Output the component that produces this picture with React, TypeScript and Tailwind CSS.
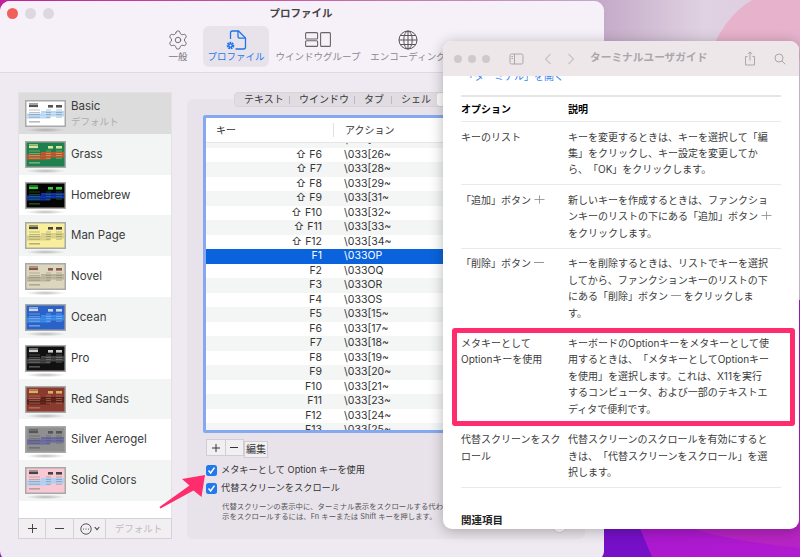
import React from "react";
import { Settings } from "lucide-react";

const FONT = 'Inter, "Noto Sans CJK JP", sans-serif';

const themes = [
  { name: "Basic", bg: "#ffffff", band: "#b4d8f8", head: "#555555", fg: "#777777" },
  { name: "Grass", bg: "#1f7f4d", band: "#c8542a", head: "#d8e89a", fg: "#d8d8a0" },
  { name: "Homebrew", bg: "#050505", band: "#1030b0", head: "#38d038", fg: "#2a9a2a" },
  { name: "Man Page", bg: "#f8ee9c", band: "#d8d088", head: "#444444", fg: "#77735a" },
  { name: "Novel", bg: "#dcd6be", band: "#b8b298", head: "#8a5a50", fg: "#857a68" },
  { name: "Ocean", bg: "#2a62c8", band: "#3a8ae8", head: "#d0d8e8", fg: "#b8cff0" },
  { name: "Pro", bg: "#111111", band: "#444444", head: "#cccccc", fg: "#999999" },
  { name: "Red Sands", bg: "#8a3a2e", band: "#5a2018", head: "#d8b060", fg: "#c8a080" },
  { name: "Silver Aerogel", bg: "#8f8f8f", band: "#6a6aa0", head: "#555555", fg: "#555555" },
  { name: "Solid Colors", bg: "#f8c8d4", band: "#a9d2f6", head: "#444444", fg: "#777777" },
];

function Thumb({ t }: { t: (typeof themes)[number] }) {
  return (
    <svg width="41" height="34" viewBox="0 0 41 34" className="shrink-0">
      <defs>
        <radialGradient id="thumbShadow">
          <stop offset="0%" stopColor="#888" stopOpacity="0.55" />
          <stop offset="100%" stopColor="#888" stopOpacity="0" />
        </radialGradient>
      </defs>
      <ellipse cx="20.5" cy="30" rx="20" ry="2.2" fill="url(#thumbShadow)" />
      <rect x="0" y="0" width="41" height="27" fill="#a9a9a9" />
      <rect x="1.5" y="1.5" width="38" height="24" fill={t.bg} />
      <rect x="4" y="3" width="9" height="0.7" fill={t.fg} />
      <rect x="4" y="4.5" width="9" height="2.6" fill={t.head} />
      <rect x="23" y="5" width="5" height="2.6" fill={t.head} />
      <rect x="31" y="5" width="6" height="2.6" fill={t.head} />
      <rect x="16" y="11" width="23" height="2.5" fill={t.band} />
      <rect x="2" y="13.5" width="37" height="3" fill={t.band} />
      <rect x="2" y="16.5" width="23" height="2" fill={t.band} />
      {[9.7, 12, 14.3, 16.8].map((y) => (
        <g key={y} fill={t.fg} opacity="0.75">
          <rect x="4" y={y} width="11" height="0.6" />
          <rect x="21" y={y} width="5" height="0.6" />
          <rect x="31" y={y} width="6" height="0.6" />
        </g>
      ))}
      <rect x="4" y="21.5" width="11" height="0.8" fill={t.fg} />
    </svg>
  );
}

function DocIcon() {
  return (
    <svg width="24" height="24" viewBox="0 0 24 24" fill="none" stroke="#1f74ee" strokeWidth="1.3">
      <path d="M6.5 11V5a2 2 0 0 1 2-2h6l7 7v9a2 2 0 0 1-2 2h-8" />
      <path d="M14 3v5.2a2 2 0 0 0 2 2h5.4" />
      <circle cx="6.5" cy="17.5" r="2.6" strokeWidth="2.4" strokeDasharray="1.6 0.6" />
      <circle cx="6.5" cy="17.5" r="2.2" fill="#1f74ee" stroke="none" />
      <circle cx="6.5" cy="17.5" r="1" fill="#f0ebf2" stroke="none" />
    </svg>
  );
}

function GroupIcon() {
  return (
    <svg width="26" height="15" viewBox="0 0 26 15" fill="none" stroke="#666" strokeWidth="1.1">
      <rect x="0.6" y="0.6" width="12" height="6.4" rx="1" />
      <rect x="0.6" y="8.8" width="12" height="5.6" rx="1" />
      <rect x="15.6" y="0.6" width="9.8" height="13.8" rx="1" />
    </svg>
  );
}

function GlobeIcon() {
  return (
    <svg width="20" height="20" viewBox="0 0 20 20" fill="none" stroke="#555" strokeWidth="1">
      <circle cx="10" cy="10" r="9" />
      <ellipse cx="10" cy="10" rx="4.2" ry="9" />
      <path d="M10 1v18M1 10h18M2.2 5.5h15.6M2.2 14.5h15.6" />
    </svg>
  );
}

function ToolItem({ icon, label, active, className }: { icon: React.ReactNode; label: string; active?: boolean; className: string }) {
  return (
    <div className={`flex flex-col items-center shrink-0 rounded-[6px] h-[41px] pt-[3px] ${active ? "bg-[#e8e3ea] text-[#2478f0]" : "text-[#8a868c]"} ${className}`}>
      <div className="h-[21px] flex items-center justify-center">{icon}</div>
      <div className="text-[9.5px] leading-[14px] whitespace-nowrap">{label}</div>
    </div>
  );
}

const keyRows: [string, string, boolean][] = [
  ["F5", "\\033[25~", true],
  ["F6", "\\033[26~", true],
  ["F7", "\\033[28~", true],
  ["F8", "\\033[29~", true],
  ["F9", "\\033[31~", true],
  ["F10", "\\033[32~", true],
  ["F11", "\\033[33~", true],
  ["F12", "\\033[34~", true],
  ["F1", "\\033OP", false],
  ["F2", "\\033OQ", false],
  ["F3", "\\033OR", false],
  ["F4", "\\033OS", false],
  ["F5", "\\033[15~", false],
  ["F6", "\\033[17~", false],
  ["F7", "\\033[18~", false],
  ["F8", "\\033[19~", false],
  ["F9", "\\033[20~", false],
  ["F10", "\\033[21~", false],
  ["F11", "\\033[23~", false],
  ["F12", "\\033[24~", false],
  ["F13", "\\033[25~", false],
];

function Check({ label, className }: { label: React.ReactNode; className: string }) {
  return (
    <div className={`flex items-center ml-[19px] h-[12px] shrink-0 ${className}`}>
      <div className="w-[11px] h-[11px] rounded-[2.5px] bg-[#1f7aee] flex items-center justify-center shrink-0">
        <svg width="9" height="9" viewBox="0 0 9 9" fill="none" stroke="#fff" strokeWidth="1.5">
          <path d="M1.5 4.6 3.6 7l3.9-5.4" />
        </svg>
      </div>
      <div className="ml-[4px] text-[9.2px] leading-[12px] text-[#333] whitespace-nowrap">{label}</div>
    </div>
  );
}

function GuideRow({ left, right }: { left: React.ReactNode; right: React.ReactNode }) {
  return (
    <div className="flex border-b border-[#e9e9e9] py-[6.5px] text-[10px] leading-[16.45px] text-[#3c3c3c] whitespace-nowrap [text-spacing-trim:space-all]">
      <div className="w-[107px] shrink-0">{left}</div>
      <div>{right}</div>
    </div>
  );
}

const Plus = () => (
  <svg width="11" height="9" viewBox="0 0 11 11" className="inline-block align-baseline" preserveAspectRatio="none" stroke="#8a8a8a" strokeWidth="0.9">
    <path d="M5.5 0.5v10M0.5 5.5h10" />
  </svg>
);
const Minus = () => (
  <svg width="10" height="3" viewBox="0 0 10 3" className="inline-block align-[3px]" stroke="#8a8a8a" strokeWidth="0.9">
    <path d="M0 1.500h10" />
  </svg>
);

function Wallpaper() {
  return (
    <svg width="800" height="557" viewBox="0 0 800 557" className="absolute inset-0">
      <defs>
        <linearGradient id="wpTop" x1="0" y1="0" x2="1" y2="0">
          <stop offset="0" stopColor="#c01f9c" />
          <stop offset="0.3" stopColor="#c8509c" />
          <stop offset="0.75" stopColor="#c4aac8" />
          <stop offset="0.88" stopColor="#e0d2e2" />
          <stop offset="1" stopColor="#dccbe0" />
        </linearGradient>
        <linearGradient id="wpBot" x1="0" y1="0" x2="1" y2="0">
          <stop offset="0" stopColor="#9a14cc" />
          <stop offset="1" stopColor="#b01ad0" />
        </linearGradient>
      </defs>
      <rect width="800" height="300" fill="url(#wpTop)" />
      <rect y="300" width="800" height="257" fill="url(#wpBot)" />
      <path d="M708 60Q722 18 752 0H800V60Z" fill="#e6b2cc" />
      <path d="M600 500H628L652 557H600Z" fill="#7610c8" />
      <path d="M640 500Q670 535 800 548V500Z" fill="#b824c4" />
    </svg>
  );
}

export default function App() {
  return (
    <div className="relative w-[800px] h-[557px] overflow-hidden" style={{ fontFamily: FONT }}>
      <Wallpaper />

      {/* Preferences window */}
      <div className="absolute left-0 top-[1px] w-[604px] h-[560px] rounded-[10px] bg-[#efeaf2] overflow-hidden flex flex-col">
        <div className="relative h-[72px] shrink-0 bg-[#f6f1f9] border-b border-[#dedade]">
          <div className="flex items-center gap-[7px] pl-[7px] h-[24px]">
            <div className="w-[11px] h-[11px] rounded-full bg-[#f0605a]" />
            <div className="w-[11px] h-[11px] rounded-full bg-[#ddd8e0]" />
            <div className="w-[11px] h-[11px] rounded-full bg-[#ddd8e0]" />
          </div>
          <div className="absolute left-0 w-[602px] top-[5px] text-center text-[10.5px] leading-[16px] font-bold text-[#444]">プロファイル</div>
          <div className="flex pl-[163px] items-start absolute top-[25px] left-0">
            <ToolItem className="w-[30px] mr-[10px] text-[#777]" label="一般" icon={<Settings size={22} strokeWidth={1} color="#666" />} />
            <ToolItem className="w-[66px] mr-[7px]" active label="プロファイル" icon={<DocIcon />} />
            <ToolItem className="w-[84px] mr-[12px]" label="ウインドウグループ" icon={<GroupIcon />} />
            <ToolItem className="w-[72px]" label="エンコーディング" icon={<GlobeIcon />} />
          </div>
        </div>

        <div className="flex pl-[18px] pt-[19px] gap-[15px]">
          {/* Profile list */}
          <div className="w-[154px] shrink-0">
            <div className="h-[426px] bg-white border-x border-t border-[#e4e0e6] overflow-hidden">
              {themes.map((t, i) => (
                <div key={t.name} className={`h-[40.8px] flex items-start pl-[6px] pt-[7px] ${i === 0 ? "bg-[#dcdcdc]" : i % 2 === 1 ? "bg-[#f3f5f5]" : "bg-white"}`}>
                  <Thumb t={t} />
                  <div className="ml-[5px]">
                    <div className={`text-[11.5px] leading-[14px] text-[#3a3a3a] whitespace-nowrap ${i === 0 ? "-mt-[1px]" : "pt-[6px]"}`}>{t.name}</div>
                    {i === 0 && <div className="text-[9.5px] leading-[14px] text-[#adadad] mt-[2px]">デフォルト</div>}
                  </div>
                </div>
              ))}
            </div>
            <div className="flex h-[21px] bg-[#f2eff3] border border-[#d4d2d6] text-[#444]">
              <div className="w-[27px] border-r border-[#d4d2d6] flex items-center justify-center">
                <svg width="11" height="11" viewBox="0 0 11 11" stroke="#444" strokeWidth="1"><path d="M5.500 1v9M1 5.500h9" /></svg>
              </div>
              <div className="w-[28px] border-r border-[#d4d2d6] flex items-center justify-center">
                <svg width="11" height="3" viewBox="0 0 11 3" stroke="#444" strokeWidth="1"><path d="M1 1.500h9" /></svg>
              </div>
              <div className="w-[32px] border-r border-[#d4d2d6] flex items-center justify-center gap-[2px]">
                <svg width="12" height="12" viewBox="0 0 12 12" fill="none" stroke="#444" strokeWidth="0.9">
                  <circle cx="6" cy="6" r="5.2" />
                  <circle cx="3.5" cy="6" r="0.6" fill="#444" stroke="none" />
                  <circle cx="6" cy="6" r="0.6" fill="#444" stroke="none" />
                  <circle cx="8.5" cy="6" r="0.6" fill="#444" stroke="none" />
                </svg>
                <svg width="6" height="5" viewBox="0 0 6 5" fill="none" stroke="#444" strokeWidth="1.1"><path d="M.7 1 3 3.600 5.300 1" /></svg>
              </div>
              <div className="flex-1 text-center text-[9.5px] leading-[19px] text-[#bdbbc0]">デフォルト</div>
            </div>
          </div>

          {/* Keyboard panel */}
          <div className="relative flex flex-col w-[398px] h-[440px] mt-[7px] rounded-[6px] bg-[#e8e3ea] shrink-0">
            <div className="-mt-[7px] ml-[47px] flex items-center h-[15px] w-[260px] shrink-0 rounded-[4px] bg-[#e0dce2] border border-[#d8d4da] text-[10px] text-[#3a3a3a]">
              <span className="ml-[9px] w-[36px] whitespace-nowrap">テキスト</span>
              <span className="ml-[9px] h-[8px] w-px bg-[#bdb9c0]" />
              <span className="ml-[9px] w-[46px] whitespace-nowrap">ウインドウ</span>
              <span className="ml-[9px] h-[8px] w-px bg-[#bdb9c0]" />
              <span className="ml-[9px] w-[18px] whitespace-nowrap">タブ</span>
              <span className="ml-[9px] h-[8px] w-px bg-[#bdb9c0]" />
              <span className="ml-[9px] w-[27px] whitespace-nowrap">シェル</span>
              <span className="ml-[9px] h-[13px] w-[30px] rounded-[3px] bg-white" />
            </div>

            <div className="ml-[16px] mt-[8px] w-[371px] h-[318px] shrink-0 border-[3px] border-[#86a8f0] rounded-[2px] bg-white flex flex-col overflow-hidden">
              <div className="h-[25px] shrink-0 flex items-center border-b border-[#e6e6e6] text-[10px] text-[#333]">
                <span className="ml-[10px] w-[117px]">キー</span>
                <span className="h-[14px] w-px bg-[#e0e0e0]" />
                <span className="ml-[11px]">アクション</span>
              </div>
              <div className="flex-1 overflow-hidden">
                <div className="-mt-[10px]">
                  {keyRows.map(([k, a, shift], i) => {
                    const selected = i === 8;
                    return (
                      <div key={i} className={`h-[14.5px] flex items-center text-[10.5px] leading-[14px] ${selected ? "bg-[#0a63dc] text-white" : i % 2 === 1 ? "bg-white text-[#333]" : "bg-[#f4f5f5] text-[#333]"}`}>
                        <div className="w-[116px] shrink-0 text-right whitespace-nowrap">
                          {shift && <span className="mr-[3px]">⇧</span>}
                          {k}
                        </div>
                        <div className="ml-[22px] whitespace-nowrap">{a}</div>
                      </div>
                    );
                  })}
                </div>
              </div>
            </div>

            <div className="flex items-start ml-[19px] mt-[6px] h-[19px] shrink-0">
              <div className="flex h-[17px] w-[38px] bg-[#f2eff3] border border-[#d0ced2]">
                <div className="flex-1 border-r border-[#d0ced2] flex items-center justify-center">
                  <svg width="10" height="10" viewBox="0 0 10 10" stroke="#333" strokeWidth="1"><path d="M5 1v8M1 5h8" /></svg>
                </div>
                <div className="flex-1 flex items-center justify-center">
                  <svg width="10" height="3" viewBox="0 0 10 3" stroke="#333" strokeWidth="1"><path d="M1 1.500h8" /></svg>
                </div>
              </div>
              <div className="mt-[2px] h-[17px] w-[24px] bg-[#f2eff3] border border-[#d0ced2] text-[10px] leading-[15px] text-center text-[#333] whitespace-nowrap">編集</div>
            </div>

            <Check className="mt-[6px]" label={<>メタキーとして Option キーを使用</>} />
            <Check className="mt-[6px]" label="代替スクリーンをスクロール" />

            <div className="ml-[35px] mt-[8px] text-[7.4px] leading-[10px] text-[#555] whitespace-nowrap">
              代替スクリーンの表示中に、ターミナル表示をスクロールする代わりに入力を送信します。表<br />
              示をスクロールするには、Fn キーまたは Shift キーを押します。
            </div>

            <div className="absolute right-[18px] bottom-[6px] w-[15px] h-[15px] rounded-full bg-white border border-[#d4d0d6]" />
          </div>
        </div>
      </div>

      {/* Guide window */}
      <div className="absolute left-[443px] top-[41px] w-[356px] h-[488px] rounded-[9px] bg-white overflow-hidden flex flex-col shadow-[0_2px_14px_rgba(0,0,0,0.28)]">
        <div className="relative z-10 h-[35px] shrink-0 bg-[#ede7ea] flex items-center text-[#aba6aa]">
          <div className="ml-[11px] flex gap-[6px]">
            <div className="w-[8px] h-[8px] rounded-full bg-[#cfc9cd]" />
            <div className="w-[8px] h-[8px] rounded-full bg-[#cfc9cd]" />
            <div className="w-[8px] h-[8px] rounded-full bg-[#cfc9cd]" />
          </div>
          <svg className="ml-[19px]" width="15" height="12" viewBox="0 0 15 12" fill="none" stroke="#aba6aa" strokeWidth="1">
            <rect x="1" y="1" width="13" height="10" rx="1.5" />
            <path d="M5.500 1v10M2.500 3.500h1.500M2.500 5.500h1.500" />
          </svg>
          <svg className="ml-[20px]" width="8" height="12" viewBox="0 0 8 12" fill="none" stroke="#c6c1c5" strokeWidth="1.1"><path d="M6.500 1 1.500 6l5 5" /></svg>
          <svg className="ml-[15px]" width="8" height="12" viewBox="0 0 8 12" fill="none" stroke="#c6c1c5" strokeWidth="1.1"><path d="M1.500 1l5 5-5 5" /></svg>
          <div className="ml-[15px] text-[10.7px] font-bold whitespace-nowrap w-[118px]">ターミナルユーザガイド</div>
          <svg className="ml-[36px]" width="12" height="15" viewBox="0 0 12 15" fill="none" stroke="#aba6aa" strokeWidth="1">
            <path d="M3.500 5.500H1.500v8.500h9V5.500H8.500M6 9.500V1M3.800 3 6 .9 8.200 3" />
          </svg>
          <svg className="ml-[18px]" width="12" height="12" viewBox="0 0 12 12" fill="none" stroke="#aba6aa" strokeWidth="1">
            <circle cx="5" cy="5" r="4" />
            <path d="M8 8l3.300 3.300" />
          </svg>
        </div>

        <div className="px-[18px] -mt-[6px] flex-1 overflow-hidden">
          <div className="text-[10px] leading-[12px] text-[#3a86f0] ml-[3px] whitespace-nowrap">「ターミナル」を開く</div>
          <div className="mt-[13px] border-t-2 border-[#e6e6e6]" />
          <div className="flex border-b border-[#e9e9e9] h-[25px] items-center text-[10px] font-bold text-black">
            <div className="w-[107px]">オプション</div>
            <div>説明</div>
          </div>
          <GuideRow
            left="キーのリスト"
            right={<>キーを変更するときは、キーを選択して「編<br />集」をクリックし、キー設定を変更してか<br />ら、「OK」をクリックします。</>}
          />
          <GuideRow
            left={<>「追加」ボタン <Plus /></>}
            right={<>新しいキーを作成するときは、ファンクショ<br />ンキーのリストの下にある「追加」ボタン <Plus /><br />をクリックします。</>}
          />
          <GuideRow
            left={<>「削除」ボタン <Minus /></>}
            right={<>キーを削除するときは、リストでキーを選択<br />してから、ファンクションキーのリストの下<br />にある「削除」ボタン <Minus /> をクリックしま<br />す。</>}
          />
          <GuideRow
            left={<>メタキーとして<br />Optionキーを使用</>}
            right={<>キーボードのOptionキーをメタキーとして使<br />用するときは、「メタキーとしてOptionキー<br />を使用」を選択します。これは、X11を実行<br />するコンピュータ、および一部のテキストエ<br />ディタで便利です。</>}
          />
          <GuideRow
            left={<>代替スクリーンをスク<br />ロール</>}
            right={<>代替スクリーンのスクロールを有効にすると<br />きは、「代替スクリーンをスクロール」を選<br />択します。</>}
          />
          <div className="mt-[25px] text-[10.5px] leading-[16px] font-bold text-[#222]">関連項目</div>
        </div>

        <div className="absolute left-[9px] top-[287px] w-[343px] h-[98px] z-20 rounded-[3px] border-[5.5px] border-[#ff2d6e]" />
      </div>

      {/* Callout arrow */}
      <svg className="absolute inset-0 pointer-events-none" width="800" height="557" viewBox="0 0 800 557">
        <path d="M205 475 182 479 189.500 485.500 159.500 507 160.500 508.500 193.500 490.500 201.500 497Z" fill="#ff2d6e" />
      </svg>
    </div>
  );
}
